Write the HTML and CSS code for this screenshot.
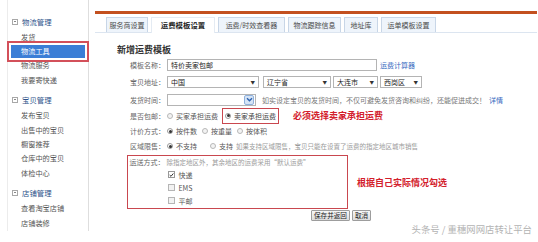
FILE: index.html
```html
<!DOCTYPE html>
<html lang="zh-CN">
<head>
<meta charset="utf-8">
<title>新增运费模板</title>
<link rel="stylesheet" href="styles.css">
</head>
<body>
<div class="page">
  <aside class="sidebar">
    <div class="group">
      <div class="ghead"><span class="minus"></span>物流管理</div>
      <div class="item">发货</div>
      <div class="item active">物流工具</div>
      <div class="item">物流服务</div>
      <div class="item">我要寄快递</div>
    </div>
    <div class="group">
      <div class="ghead"><span class="minus"></span>宝贝管理</div>
      <div class="item">发布宝贝</div>
      <div class="item">出售中的宝贝</div>
      <div class="item">橱窗推荐</div>
      <div class="item">仓库中的宝贝</div>
      <div class="item">体检中心</div>
    </div>
    <div class="group">
      <div class="ghead"><span class="minus"></span>店铺管理</div>
      <div class="item">查看淘宝店铺</div>
      <div class="item">店铺装修</div>
    </div>
  </aside>

  <main class="main">
    <div class="topbar"></div>
    <div class="tabs">
      <span class="tab t1">服务商设置</span>
      <span class="tab t2 active">运费模板设置</span>
      <span class="tab t3">运费/时效查看器</span>
      <span class="tab t4">物流跟踪信息</span>
      <span class="tab t5">地址库</span>
      <span class="tab t6">运单模板设置</span>
    </div>

    <h2 class="title">新增运费模板</h2>

    <div class="form">
      <div class="row r1">
        <span class="label">模板名称：</span>
        <span class="input name">特价卖家包邮</span>
        <a class="link calc">运费计算器</a>
      </div>
      <div class="row r2">
        <span class="label">宝贝地址：</span>
        <span class="select s1">中国<i>▼</i></span>
        <span class="select s2">辽宁省<i>▼</i></span>
        <span class="select s3">大连市<i>▼</i></span>
        <span class="select s4">西岗区<i>▼</i></span>
      </div>
      <div class="row r3">
        <span class="label">发货时间：</span>
        <span class="select time"><b class="dd"><svg width="7" height="7" viewBox="0 0 7 7"><path d="M1 2.2 L3.5 4.7 L6 2.2" fill="none" stroke="#2d62b0" stroke-width="1.4"/></svg></b></span>
        <span class="hint">如实设定宝贝的发货时间，不仅可避免发货咨询和纠纷，还能促进成交！<a class="link">详情</a></span>
      </div>
      <div class="row r4">
        <span class="label">是否包邮：</span>
        <span class="opt"><span class="radio"></span>买家承担运费</span>
        <span class="opt boxed"><span class="radio on"></span>卖家承担运费</span>
        <span class="note note1">必须选择卖家承担运费</span>
      </div>
      <div class="row r5">
        <span class="label">计价方式：</span>
        <span class="opt"><span class="radio on"></span>按件数</span>
        <span class="opt"><span class="radio"></span>按重量</span>
        <span class="opt"><span class="radio"></span>按体积</span>
      </div>
      <div class="row r6">
        <span class="label">区域限售：</span>
        <span class="opt"><span class="radio on"></span>不支持</span>
        <span class="opt wide"><span class="radio"></span>支持</span>
        <span class="gray">如果支持区域限售，宝贝只能在设置了运费的指定地区城市销售</span>
      </div>

      <div class="boxrow">
        <div class="box">
          <div class="brow">
            <span class="blabel">运送方式：</span>
            <span class="gray">除指定地区外，其余地区的运费采用“默认运费”</span>
          </div>
          <div class="crow"><span class="check on"><svg width="6" height="6" viewBox="0 0 6 6"><path d="M0.8 3.1 L2.4 4.6 L5.2 1.2" fill="none" stroke="#333" stroke-width="1.2"/></svg></span>快递</div>
          <div class="crow"><span class="check"></span>EMS</div>
          <div class="crow"><span class="check"></span>平邮</div>
        </div>
        <span class="note note2">根据自己实际情况勾选</span>
      </div>

      <div class="buttons">
        <button class="btn">保存并返回</button>
        <button class="btn">取消</button>
      </div>
    </div>

    <div class="watermark">头条号 / 重穗网网店转让平台</div>
  </main>
</div>
</body>
</html>
```

FILE: styles.css
```css
* { box-sizing: border-box; }

html, body {
  margin: 0;
  padding: 0;
  background: #fff;
}

body {
  width: 538px;
  height: 242px;
  overflow: hidden;
  font-family: "Noto Sans CJK SC", "Noto Sans", sans-serif;
  font-size: 7px;
  color: #555;
}

.page {
  display: flex;
  align-items: flex-start;
}

/* ---------- sidebar ---------- */
.sidebar {
  margin-left: 7px;
  width: 82px;
  height: 231px;
  border-left: 1px solid #ececec;
  border-right: 1px solid #dedede;
  padding-top: 13px;
  font-size: 7.2px;
}

.group + .group { margin-top: 4px; }

.ghead {
  height: 17px;
  display: flex;
  align-items: center;
  padding-left: 4px;
  color: #2c5189;
  font-size: 7.4px;
}

.minus {
  position: relative;
  width: 6px;
  height: 6px;
  border: 1px solid #a8a8a8;
  margin-right: 4px;
}
.minus::after {
  content: "";
  position: absolute;
  left: 1px;
  right: 1px;
  top: 1.5px;
  height: 1px;
  background: #888;
}

.item {
  height: 14.4px;
  line-height: 14.4px;
  padding-left: 13px;
  color: #555;
}

.item.active {
  margin: 1px 3px 0 3px;
  height: 13px;
  line-height: 13px;
  padding-left: 10px;
  background: #3b7ed6;
  color: #fff;
  outline: 2px solid #d3505a;
  outline-offset: 2px;
}

/* ---------- main ---------- */
.main {
  flex: 1;
  margin-left: 6px;
  margin-right: 1px;
  padding-top: 11px;
}

.topbar {
  height: 3px;
  background: #c3501f;
}

.tabs {
  margin-top: 3px;
  display: flex;
  align-items: flex-end;
  gap: 3px;
  padding-left: 11px;
  height: 16px;
  border-bottom: 1px solid #dce5f0;
}

.tab {
  height: 15px;
  line-height: 14px;
  text-align: center;
  background: #eef4fb;
  border: 1px solid #c8d6e7;
  border-bottom: none;
  color: #4a4a4a;
  font-size: 7px;
  white-space: nowrap;
}
.t1 { width: 42px; }
.t2 { width: 64px; }
.t3 { width: 67px; }
.t4 { width: 53px; }
.t5 { width: 34px; }
.t6 { width: 55px; }

.tab.active {
  background: #fff;
  border-color: #e4ebf3;
  color: #222;
  font-weight: 700;
  font-size: 7.4px;
  margin-bottom: -1px;
  height: 16px;
}

.title {
  margin: 10px 0 0 22px;
  height: 14px;
  line-height: 14px;
  font-size: 9px;
  font-weight: 600;
  color: #333;
}

/* ---------- form ---------- */
.row {
  display: flex;
  align-items: center;
  padding-left: 30px;
}
.r1 { height: 16px; }
.r2 { height: 18px; }
.r3 { height: 17px; }
.r4 { height: 15px; }
.r5 { height: 16px; }
.r6 { height: 14px; }

.label {
  width: 40px;
  text-align: right;
  color: #666;
  margin-right: 2px;
  white-space: nowrap;
}

.input, .select {
  height: 12px;
  border: 1px solid #b4b4b4;
  background: #fff;
  display: flex;
  align-items: center;
  padding-left: 3px;
  color: #222;
  white-space: nowrap;
}

.name { width: 210px; }

.link {
  color: #3569c0;
  text-decoration: none;
}
.calc { margin-left: 3px; }

.select { justify-content: space-between; }
.select i {
  font-style: normal;
  font-size: 4.5px;
  color: #333;
  padding-right: 3px;
}
.s1 { width: 92px; }
.s2 { width: 68px; margin-left: 4px; }
.s3 { width: 45px; margin-left: 2px; }
.s4 { width: 42px; margin-left: 2px; }

.time {
  width: 89px;
  justify-content: flex-end;
  padding: 0 1px 0 0;
}
.dd {
  width: 10px;
  height: 10px;
  display: flex;
  align-items: center;
  justify-content: center;
  background: #d5e4f6;
  border: 1px solid #8fb1dc;
  border-radius: 2px;
}

.hint {
  margin-left: 6px;
  color: #777;
  white-space: nowrap;
}
.hint .link { margin-left: 3px; }

.opt {
  display: flex;
  align-items: center;
  margin-right: 5px;
  color: #555;
  white-space: nowrap;
}
.opt.wide { margin-left: 8px; margin-right: 3px; }

.radio {
  width: 6px;
  height: 6px;
  border-radius: 50%;
  border: 1px solid #b8b8b8;
  background: #f3f3f3;
  margin-right: 3px;
  display: flex;
  align-items: center;
  justify-content: center;
}
.radio.on { border-color: #9a9a9a; background: #fff; }
.radio.on::after {
  content: "";
  width: 3px;
  height: 3px;
  border-radius: 50%;
  background: #333;
}

.boxed {
  outline: 1.5px solid #c9474f;
  outline-offset: 2px;
  margin-left: 2px;
  color: #444;
}

.note {
  color: #d3202c;
  font-weight: 700;
  font-size: 9px;
  white-space: nowrap;
}
.note1 { margin-left: 12px; }
.note2 { margin-left: 9px; }

.gray {
  color: #9a9a9a;
  font-size: 6.5px;
  white-space: nowrap;
}

/* ---------- shipping box ---------- */
.boxrow {
  margin-top: 2px;
  margin-left: 32px;
  display: flex;
  align-items: center;
}

.box {
  width: 221px;
  height: 54px;
  border: 1.5px solid #c9474f;
}

.brow {
  height: 12px;
  display: flex;
  align-items: center;
}
.blabel {
  width: 36.5px;
  text-align: right;
  color: #666;
  margin-right: 2px;
  white-space: nowrap;
}

.crow {
  height: 13px;
  display: flex;
  align-items: center;
  padding-left: 39.5px;
  color: #555;
}

.check {
  width: 7px;
  height: 7px;
  border: 1px solid #b5b5b5;
  background: #f2f2f2;
  margin-right: 4px;
  display: flex;
  align-items: center;
  justify-content: center;
}
.check.on { background: #fff; border-color: #999; }

.buttons {
  margin-top: 1px;
  margin-left: 216px;
  display: flex;
  gap: 2px;
}

.btn {
  height: 11px;
  padding: 0 2px;
  font-family: inherit;
  font-size: 6.6px;
  line-height: 9px;
  color: #222;
  border: 1px solid #9d9d9d;
  background: linear-gradient(#f7f7f7, #dcdcdc);
  border-radius: 1px;
}

.watermark {
  margin-top: 3px;
  text-align: right;
  padding-right: 5px;
  font-size: 9.4px;
  line-height: 10px;
  color: #b3b3b3;
}
```
